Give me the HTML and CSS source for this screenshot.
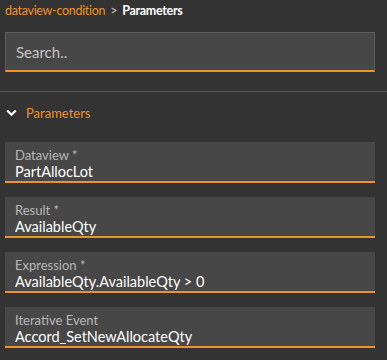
FILE: index.html
```html
<!DOCTYPE html>
<html lang="en">
<head>
  <meta charset="UTF-8">
  <meta name="viewport" content="width=device-width, initial-scale=1.0">
  <title>Parameters</title>
  <link rel="stylesheet" href="styles.css">
</head>
<body>

  <!-- Breadcrumb -->
  <div class="breadcrumb">
    <span class="crumb-link">dataview-condition</span>
    <span class="crumb-sep">&gt;</span>
    <span class="crumb-current">Parameters</span>
  </div>

  <!-- Search -->
  <div class="search">
    <input type="text" placeholder="Search.." />
  </div>

  <hr class="divider">

  <!-- Section -->
  <div class="section-head">
    <svg class="chevron" width="11" height="8" viewBox="0 0 11 8">
      <path d="M1.2 1.5 L5.5 5.8 L9.8 1.5" fill="none" stroke="#ffffff" stroke-width="2.2"/>
    </svg>
    <span>Parameters</span>
  </div>

  <div class="fields">
    <div class="field">
      <label>Dataview *</label>
      <div class="value">PartAllocLot</div>
    </div>
    <div class="field">
      <label>Result *</label>
      <div class="value">AvailableQty</div>
    </div>
    <div class="field">
      <label>Expression *</label>
      <div class="value">AvailableQty.AvailableQty &gt; 0</div>
    </div>
    <div class="field">
      <label>Iterative Event</label>
      <div class="value">Accord_SetNewAllocateQty</div>
    </div>
  </div>

</body>
</html>
```

FILE: styles.css
```css
:root {
  --bg-color: #333333;
  --field-bg: #474747;
  --main-color: #ee922b;
  --text-color: #ffffff;
  --label-color: #b8b8b8;
}

html, body {
  margin: 0;
  padding: 0;
  background-color: var(--bg-color);
  color: var(--text-color);
  font-family: 'Lato', sans-serif;
}

/* Breadcrumb */
.breadcrumb {
  display: flex;
  gap: 5px;
  height: 22px;
  line-height: 22px;
  padding-left: 5px;
  font-size: 12.5px;
  letter-spacing: -0.3px;
}

.crumb-link {
  color: var(--main-color);
}

.crumb-sep {
  color: #cccccc;
}

.crumb-current {
  font-weight: bold;
}

/* Search */
.search {
  margin: 10px 12px 0 5px;
}

.search input {
  display: block;
  box-sizing: border-box;
  width: 100%;
  height: 40px;
  padding: 0 10px;
  font-family: inherit;
  font-size: 15px;
  color: var(--text-color);
  background-color: var(--field-bg);
  border: 1px solid #5e5e5e;
  border-bottom: 2px solid var(--main-color);
  outline: none;
}

.search input::placeholder {
  color: #c4c4c4;
}

.divider {
  border: none;
  border-top: 1px solid #5a5a5a;
  margin: 19px 0 0 0;
}

/* Section header */
.section-head {
  display: flex;
  align-items: center;
  height: 41px;
  padding-left: 6px;
  font-size: 13px;
  color: var(--main-color);
}

.chevron {
  margin-right: 9px;
}

/* Fields */
.fields {
  display: flex;
  flex-direction: column;
  gap: 14px;
  margin: 9px 12px 0 5px;
}

.field {
  height: 41px;
  padding: 6px 10px 0 10px;
  box-sizing: border-box;
  background-color: var(--field-bg);
  border-bottom: 2px solid var(--main-color);
}

.field label {
  display: block;
  font-size: 13px;
  line-height: 15px;
  color: var(--label-color);
}

.field .value {
  font-size: 14.5px;
  line-height: 17px;
}
```
